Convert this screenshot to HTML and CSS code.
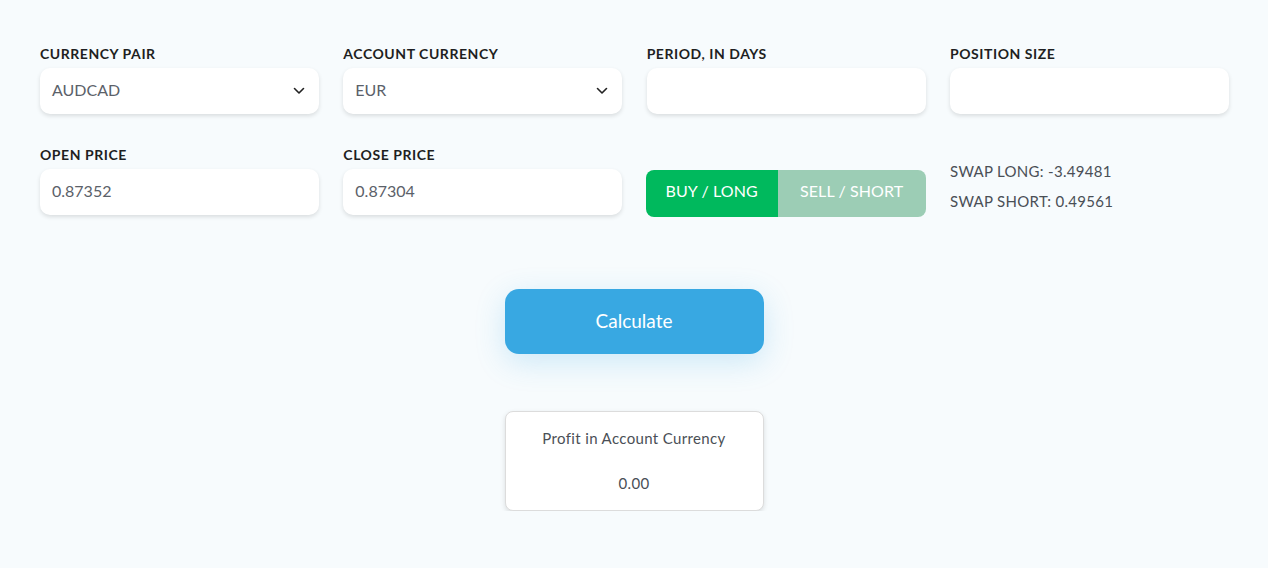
FILE: index.html
```html
<!DOCTYPE html>
<html>
<head>
<meta charset="utf-8">
<link rel="stylesheet" href="styles.css">
</head>
<body>
<div class="calc">
  <div class="grid">
    <div class="field">
      <div class="label">CURRENCY PAIR</div>
      <div class="box select"><span>AUDCAD</span>
        <svg class="chev" width="12" height="8" viewBox="0 0 12 8"><path d="M1.5 1.5 L6 6 L10.5 1.5" fill="none" stroke="#222" stroke-width="1.6" stroke-linecap="round" stroke-linejoin="round"/></svg>
      </div>
    </div>
    <div class="field">
      <div class="label">ACCOUNT CURRENCY</div>
      <div class="box select"><span>EUR</span>
        <svg class="chev" width="12" height="8" viewBox="0 0 12 8"><path d="M1.5 1.5 L6 6 L10.5 1.5" fill="none" stroke="#222" stroke-width="1.6" stroke-linecap="round" stroke-linejoin="round"/></svg>
      </div>
    </div>
    <div class="field">
      <div class="label">PERIOD, IN DAYS</div>
      <div class="box"></div>
    </div>
    <div class="field">
      <div class="label">POSITION SIZE</div>
      <div class="box"></div>
    </div>

    <div class="field row2">
      <div class="label">OPEN PRICE</div>
      <div class="box"><span>0.87352</span></div>
    </div>
    <div class="field row2">
      <div class="label">CLOSE PRICE</div>
      <div class="box"><span>0.87304</span></div>
    </div>
    <div class="field row2 toggle-cell">
      <div class="toggle">
        <div class="tbtn buy">BUY / LONG</div>
        <div class="tbtn sell">SELL / SHORT</div>
      </div>
    </div>
    <div class="field row2 swap">
      <div>SWAP LONG: -3.49481</div>
      <div>SWAP SHORT: 0.49561</div>
    </div>
  </div>

  <div class="actions">
    <div class="calc-btn">Calculate</div>
  </div>

  <div class="result">
    <div class="result-title">Profit in Account Currency</div>
    <div class="result-value">0.00</div>
  </div>
</div>
</body>
</html>
```
FILE: styles.css
```css
html, body {
  margin: 0;
  padding: 0;
  background: #f7fbfd;
  font-family: "Lato", "Open Sans", sans-serif;
  color: #222;
}
.calc {
  padding: 45px 0 0 40px;
  width: 1188px;
}
.grid {
  display: grid;
  grid-template-columns: repeat(4, 279px);
  column-gap: 24.33px;
  row-gap: 32px;
}
.field {
  display: flex;
  flex-direction: column;
}
.label {
  font-size: 14px;
  font-weight: 700;
  line-height: 18px;
  height: 18px;
  margin-bottom: 5px;
  color: #1e1f22;
  letter-spacing: 0.55px;
}
.box {
  height: 46px;
  background: #fff;
  border-radius: 10px;
  box-shadow: 0 2px 4px rgba(0,0,0,0.12);
  display: flex;
  align-items: center;
  padding: 0 12px 3px;
  font-size: 16px;
  color: #5b6169;
  box-sizing: border-box;
}
.select {
  justify-content: space-between;
  padding-right: 14px;
}
.chev {
  margin-top: 3px;
}
.toggle-cell {
  justify-content: flex-end;
}
.toggle {
  display: flex;
  height: 47px;
  width: 280px;
  margin-left: -1px;
  margin-bottom: -1px;
  border-radius: 8px;
  overflow: hidden;
}
.tbtn {
  display: flex;
  align-items: center;
  justify-content: center;
  color: #fff;
  font-size: 16px;
  padding-bottom: 7px;
  box-sizing: border-box;
  letter-spacing: 0.1px;
}
.buy {
  width: 132px;
  background: #00b95d;
}
.sell {
  flex: 1;
  background: #9ccdb5;
}
.swap {
  padding-top: 10px;
  font-size: 15px;
  line-height: 30px;
  color: #4a4f56;
  letter-spacing: 0.3px;
}
.actions {
  display: flex;
  justify-content: center;
  margin-top: 73px;
}
.calc-btn {
  width: 259px;
  height: 65px;
  border-radius: 14px;
  background: #38a8e2;
  color: #fff;
  font-size: 19px;
  display: flex;
  align-items: center;
  justify-content: center;
  padding-bottom: 2px;
  box-sizing: border-box;
  box-shadow: 0 8px 30px rgba(56,168,226,0.22);
}
.result {
  margin: 57px auto 0;
  width: 259px;
  height: 100px;
  box-sizing: border-box;
  background: #fff;
  border: 1px solid #dcdcdc;
  border-radius: 8px;
  box-shadow: 0 2px 5px rgba(0,0,0,0.12);
  text-align: center;
  color: #4a4f56;
  font-size: 15px;
  letter-spacing: 0.35px;
}
.result-title {
  margin-top: 16px;
  line-height: 20px;
}
.result-value {
  margin-top: 25px;
  line-height: 20px;
}
```
